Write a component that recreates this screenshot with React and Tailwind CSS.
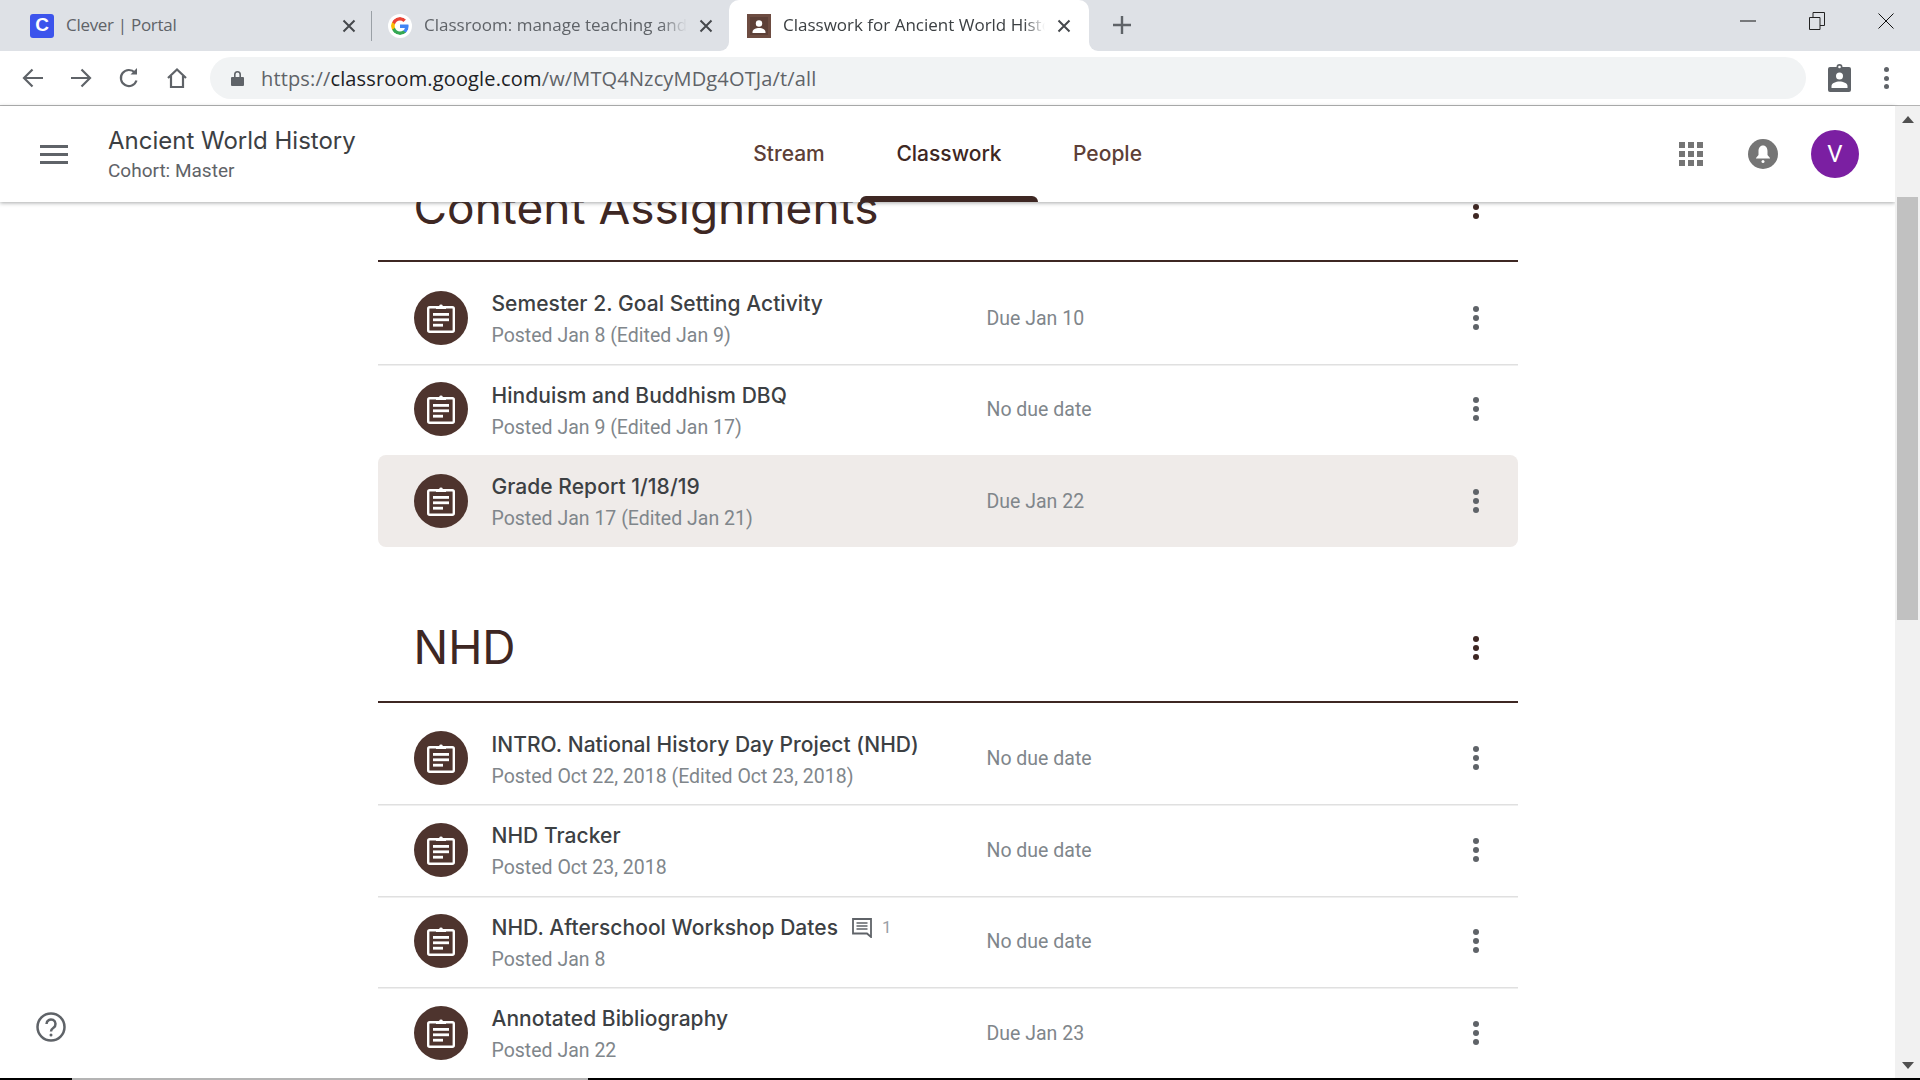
import { Fragment } from 'react';

const contentRows = [
  { title: 'Semester 2. Goal Setting Activity', posted: 'Posted Jan 8 (Edited Jan 9)', due: 'Due Jan 10' },
  { title: 'Hinduism and Buddhism DBQ', posted: 'Posted Jan 9 (Edited Jan 17)', due: 'No due date' },
  { title: 'Grade Report 1/18/19', posted: 'Posted Jan 17 (Edited Jan 21)', due: 'Due Jan 22', active: true },
];

const nhdRows = [
  { title: 'INTRO. National History Day Project (NHD)', posted: 'Posted Oct 22, 2018 (Edited Oct 23, 2018)', due: 'No due date' },
  { title: 'NHD Tracker', posted: 'Posted Oct 23, 2018', due: 'No due date' },
  { title: 'NHD. Afterschool Workshop Dates', posted: 'Posted Jan 8', due: 'No due date', comments: 1 },
  { title: 'Annotated Bibliography', posted: 'Posted Jan 22', due: 'Due Jan 23' },
];

function Dots({ dark }) {
  const dot = `w-[6px] h-[6px] rounded-full ${dark ? 'bg-[#3e2723]' : 'bg-[#5f6368]'}`;
  return (
    <div className="flex flex-col gap-[3px]">
      <div className={dot} />
      <div className={dot} />
      <div className={dot} />
    </div>
  );
}

function TabClose() {
  return (
    <svg width="14" height="14" viewBox="0 0 14 14" className="shrink-0">
      <path d="M1.5 1.5l11 11M12.5 1.5l-11 11" stroke="#45484c" strokeWidth="2" />
    </svg>
  );
}

function AssignmentIcon() {
  return (
    <div className="w-[54px] h-[54px] rounded-full bg-[#4e342e] flex items-center justify-center shrink-0">
      <svg width="28" height="30" viewBox="0 0 28 30" fill="none">
        <rect x="1.2" y="4.200" width="25.600" height="24.600" rx="1.500" stroke="#fff" strokeWidth="2.400" />
        <path d="M9 6V3h3.100a2 2 0 0 1 3.800 0H19v3z" fill="#fff" />
        <rect x="6" y="10" width="16" height="2.800" fill="#fff" />
        <rect x="6" y="15.400" width="16" height="2.800" fill="#fff" />
        <rect x="6" y="20.800" width="10" height="2.800" fill="#fff" />
      </svg>
    </div>
  );
}

function Row({ row, last }) {
  return (
    <div
      className={`h-[91.5px] flex items-center pl-[36px] pr-[39px] ${
        row.active ? 'bg-[#efebe9] rounded-[8px]' : last ? '' : 'shadow-[0_1.5px_0_#e0e0e0]'
      }`}
    >
      <AssignmentIcon />
      <div className="ml-[24px] w-[495px] shrink-0 pt-[4px]">
        <div className="flex items-center">
          <span className="text-[21px] leading-[32px] font-medium text-[#3c4043] font-['Inter',sans-serif] tracking-[0.05px]">
            {row.title}
          </span>
          {row.comments && (
            <span className="flex items-center ml-[14px]">
              <svg width="20" height="20" viewBox="0 0 20 20" fill="none">
                <path d="M1 1h18v18l-4-3.5H1z" stroke="#5f6368" strokeWidth="1.8" />
                <path d="M4.5 5h11M4.5 8h11M4.5 11h11" stroke="#5f6368" strokeWidth="1.6" />
              </svg>
              <span className="ml-[10px] text-[17px] text-[#9aa0a6] font-['Roboto',sans-serif]">{row.comments}</span>
            </span>
          )}
        </div>
        <div className="text-[19.500px] leading-[30px] mt-[1px] text-[#80868b] font-['Roboto',sans-serif]">{row.posted}</div>
      </div>
      <div className="text-[19.500px] pt-[1px] text-[#80868b] font-['Roboto',sans-serif]">{row.due}</div>
      <div className="ml-auto">
        <Dots />
      </div>
    </div>
  );
}

function Section({ title, rows, className }) {
  return (
    <section className={className}>
      <div className="h-[110px] flex items-center justify-between pt-[2px] pl-[36px] pr-[39px] border-b-[2px] border-[#3e2723]">
        <h2 className="text-[46px] font-normal text-[#3e2723] font-['Inter',sans-serif]">{title}</h2>
        <Dots dark />
      </div>
      <div className="pt-[10px]">
        {rows.map((row, i) => (
          <Row key={row.title} row={row} last={i === rows.length - 1 || rows[i + 1].active} />
        ))}
      </div>
    </section>
  );
}

function BrowserChrome() {
  const ui = "font-['Open_Sans',sans-serif]";
  return (
    <Fragment>
      {/* Tabs */}
      <div className={`h-[51px] bg-[#dee1e6] flex shrink-0 ${ui}`}>
        <div className="w-[372px] flex items-center pl-[30px] pr-[16px] relative">
          <div className="w-[24px] h-[24px] rounded-[3px] bg-[#3c54ec] text-white text-[19px] font-bold flex items-center justify-center shrink-0 font-['Liberation_Sans',sans-serif]">
            C
          </div>
          <span className="ml-[12px] -mt-[2px] text-[17px] text-[#5f6368] tracking-[-0.3px]">Clever | Portal</span>
          <span className="ml-auto">
            <TabClose />
          </span>
          <div className="absolute right-0 top-[11px] w-[1px] h-[30px] bg-[#9aa0a6]" />
        </div>
        <div className="w-[357px] flex items-center pl-[16px] pr-[16px]">
          <svg width="24" height="24" viewBox="0 0 24 24" className="shrink-0 bg-white rounded-full p-[3px]">
            <path fill="#4285F4" d="M23.5 12.3c0-.8-.1-1.6-.2-2.3H12v4.5h6.5c-.3 1.5-1.1 2.8-2.4 3.6v3h3.9c2.2-2.1 3.5-5.1 3.5-8.8z" />
            <path fill="#34A853" d="M12 24c3.2 0 6-1.1 8-2.9l-3.9-3c-1.1.7-2.5 1.2-4.1 1.2-3.1 0-5.8-2.1-6.7-5H1.3v3.1C3.3 21.3 7.3 24 12 24z" />
            <path fill="#FBBC05" d="M5.3 14.3c-.5-1.5-.5-3.100 0-4.600V6.600h-4C-.4 9.900-.4 14.100 1.300 17.400z" />
            <path fill="#EA4335" d="M12 4.800c1.800 0 3.300.6 4.600 1.800l3.400-3.400C17.900 1.200 15.200 0 12 0 7.300 0 3.300 2.700 1.300 6.600l4 3.100c.9-2.800 3.600-4.900 6.700-4.900z" />
          </svg>
          <span className="ml-[12px] -mt-[2px] w-[263px] whitespace-nowrap overflow-hidden text-[17px] text-[#5f6368] [mask-image:linear-gradient(to_right,black_90%,transparent)]">
            Classroom: manage teaching and learning
          </span>
          <span className="ml-auto">
            <TabClose />
          </span>
        </div>
        <div className="w-[360px] bg-white rounded-t-[10px] flex items-center pl-[18px] pr-[18px] relative">
          <div className="absolute left-[-9px] bottom-0 w-[9px] h-[9px] bg-white">
            <div className="w-full h-full bg-[#dee1e6] rounded-br-[9px]" />
          </div>
          <div className="absolute right-[-9px] bottom-0 w-[9px] h-[9px] bg-white">
            <div className="w-full h-full bg-[#dee1e6] rounded-bl-[9px]" />
          </div>
          <svg width="24" height="24" viewBox="0 0 24 24" className="shrink-0">
            <rect width="24" height="24" fill="#6d4c41" />
            <rect x="3" y="3" width="18" height="18" fill="#5d4037" />
            <circle cx="12" cy="9.500" r="3.200" fill="#fff" />
            <path d="M5.500 18c0-2.800 3.600-4 6.500-4s6.500 1.200 6.500 4v1h-13z" fill="#fff" />
          </svg>
          <span className="ml-[12px] -mt-[2px] w-[262px] whitespace-nowrap overflow-hidden text-[17px] text-[#3c4043] [mask-image:linear-gradient(to_right,black_92%,transparent)]">
            Classwork for Ancient World History
          </span>
          <span className="ml-auto">
            <TabClose />
          </span>
        </div>
        <div className="ml-[23px] flex items-center pb-[2px]">
          <svg width="20" height="20" viewBox="0 0 20 20">
            <path d="M10 1v18M1 10h18" stroke="#5f6368" strokeWidth="2.400" />
          </svg>
        </div>
        <div className="ml-auto flex items-center pr-[26px] gap-[53px] pb-[9px]">
          <svg width="16" height="16" viewBox="0 0 16 16">
            <path d="M0 8h16" stroke="#111" strokeWidth="1" />
          </svg>
          <svg width="16" height="18" viewBox="0 0 16 18" fill="none">
            <path d="M.5 5.500h10.500v12H.5zM4 5.500V.5h11.500v13H11" stroke="#222" strokeWidth="1" />
          </svg>
          <svg width="16" height="16" viewBox="0 0 16 16">
            <path d="M.5.500l15 15M15.500.500l-15 15" stroke="#111" strokeWidth="1" />
          </svg>
        </div>
      </div>

      {/* Toolbar */}
      <div className="h-[55px] bg-white border-b border-[#b4b4b4] flex items-center shrink-0">
        <div className="flex items-center pl-[22px] gap-[26px]">
          <svg width="22" height="22" viewBox="0 0 22 22" fill="none" stroke="#5f6368" strokeWidth="2.200">
            <path d="M21 11H2M10.500 2.500L2 11l8.500 8.500" />
          </svg>
          <svg width="22" height="22" viewBox="0 0 22 22" fill="none" stroke="#5f6368" strokeWidth="2.200">
            <path d="M1 11h19M11.500 2.500L20 11l-8.500 8.500" />
          </svg>
          <svg width="22" height="22" viewBox="0 0 22 22" fill="none" stroke="#5f6368" strokeWidth="2.200">
            <path d="M18.500 13.500a8 8 0 1 1-1.600-7.800" />
            <path d="M19 1v6.500h-6.500" fill="#5f6368" stroke="none" />
          </svg>
          <svg width="22" height="22" viewBox="0 0 22 22" fill="none" stroke="#5f6368" strokeWidth="2.200">
            <path d="M2 11l9-8.500 9 8.500M5 9v11h12V9" />
          </svg>
        </div>
        <div className={`ml-[22px] w-[1596px] h-[42px] rounded-full bg-[#f1f3f4] flex items-center pl-[21px] ${ui}`}>
          <svg width="13" height="16" viewBox="0 0 13 16" className="shrink-0">
            <path d="M3 7V4.500a3.500 3.500 0 0 1 7 0V7h2a1 1 0 0 1 1 1v7a1 1 0 0 1-1 1H1a1 1 0 0 1-1-1V8a1 1 0 0 1 1-1zm1.600 0h3.800V4.500a1.900 1.900 0 0 0-3.800 0z" fill="#5f6368" />
          </svg>
          <span className="ml-[17px] pt-[1px] text-[20px] text-[#5f6368] tracking-[0.15px]">
            https://<span className="text-[#202124]">classroom.google.com</span>/w/MTQ4NzcyMDg4OTJa/t/all
          </span>
        </div>
        <div className="ml-auto flex items-center pr-[31px] gap-[33px]">
          <svg width="23" height="28" viewBox="0 0 23 28">
            <path d="M2 3h6.500a3 3 0 0 1 6 0H21a2 2 0 0 1 2 2v21a2 2 0 0 1-2 2H2a2 2 0 0 1-2-2V5a2 2 0 0 1 2-2z" fill="#5f6368" />
            <circle cx="11.500" cy="3" r="1.300" fill="#fff" />
            <circle cx="11.500" cy="12" r="3.500" fill="#fff" />
            <path d="M3.500 24v-2c0-3 4.500-4.500 8-4.500s8 1.500 8 4.500v2z" fill="#fff" />
          </svg>
          <div className="flex flex-col gap-[3.500px]">
            <div className="w-[5px] h-[5px] rounded-full bg-[#5f6368]" />
            <div className="w-[5px] h-[5px] rounded-full bg-[#5f6368]" />
            <div className="w-[5px] h-[5px] rounded-full bg-[#5f6368]" />
          </div>
        </div>
      </div>
    </Fragment>
  );
}

function ClassHeader() {
  return (
    <header className="h-[96px] bg-white shadow-[0_1px_4px_rgba(60,64,67,0.45)] relative z-10 flex items-center shrink-0">
      <div className="w-[108px] pl-[40px] shrink-0">
        <div className="w-[28px] flex flex-col gap-[5px]">
          <div className="h-[3px] bg-[#5f6368]" />
          <div className="h-[3px] bg-[#5f6368]" />
          <div className="h-[3px] bg-[#5f6368]" />
        </div>
      </div>
      <div className="w-[645px] shrink-0 pt-[3px]">
        <div className="text-[24px] leading-[30px] text-[#3c4043] font-['Inter',sans-serif]">Ancient World History</div>
        <div className="text-[19px] leading-[28px] mt-[1px] text-[#5f6368] font-['Roboto',sans-serif]">Cohort: Master</div>
      </div>
      <nav className="h-full flex text-[21px] font-medium font-['Inter',sans-serif]">
        <div className="w-[72px] flex items-center justify-center text-[#5d4037]">Stream</div>
        <div className="ml-[35px] w-[178px] flex items-center justify-center text-[#3e2723] relative">
          Classwork
          <div className="absolute left-0 right-0 bottom-0 h-[6px] bg-[#3e2723] rounded-t-[6px]" />
        </div>
        <div className="ml-[36px] w-[67px] flex items-center justify-center text-[#5d4037]">People</div>
      </nav>
      <div className="ml-auto flex items-center pr-[36px]">
        <div className="grid grid-cols-3 gap-[3px]">
          {[...Array(9).keys()].map((i) => (
            <div key={i} className="w-[6px] h-[6px] bg-[#757575]" />
          ))}
        </div>
        <div className="ml-[45px] w-[30px] h-[30px] rounded-full bg-[#757575] flex items-center justify-center">
          <svg width="18" height="20" viewBox="0 0 18 20">
            <path d="M9 1.500c3 0 4.500 2.500 4.500 5.500v4l2.500 3v.5H2V14l2.500-3V7c0-3 1.500-5.500 4.500-5.500z" fill="#fff" />
            <circle cx="9" cy="17.500" r="1.500" fill="#fff" />
          </svg>
        </div>
        <div className="ml-[33px] w-[48px] h-[48px] rounded-full bg-[#7b1fa2] text-white text-[24px] flex items-center justify-center font-['Roboto',sans-serif]">
          V
        </div>
      </div>
    </header>
  );
}

export default function App() {
  return (
    <div className="w-[1920px] h-[1080px] overflow-hidden flex flex-col bg-white">
      <BrowserChrome />

      <div className="flex-1 min-h-0 flex">
        {/* Page */}
        <div className="flex-1 min-w-0 flex flex-col relative">
          <ClassHeader />
          <main className="flex-1 min-h-0 overflow-hidden">
            <div className="w-[1140px] mx-auto -mt-[50px]">
              <Section title="Content Assignments" rows={contentRows} />
              <Section title="NHD" rows={nhdRows} className="mt-[46px]" />
            </div>
          </main>
          {/* Help button floats over the page */}
          <svg width="30" height="30" viewBox="0 0 30 30" fill="none" className="absolute left-[36px] bottom-[36px]">
            <circle cx="15" cy="15" r="13.500" stroke="#5f6368" strokeWidth="2.500" />
            <path d="M10.500 12a4.500 4.500 0 1 1 7 3.700c-1.500 1-2.500 1.800-2.500 3.800" stroke="#5f6368" strokeWidth="2.500" />
            <circle cx="15" cy="23" r="1.500" fill="#5f6368" />
          </svg>
        </div>

        {/* Scrollbar */}
        <div className="w-[25px] bg-[#f1f1f1] flex flex-col items-center relative z-20">
          <svg width="12" height="7" viewBox="0 0 12 7" className="mt-[10px]">
            <path d="M6 0l6 7H0z" fill="#505050" />
          </svg>
          <div className="mt-[74px] w-[21px] h-[423px] bg-[#c1c1c1]" />
          <svg width="12" height="7" viewBox="0 0 12 7" className="mt-auto mb-[9px]">
            <path d="M0 0h12L6 7z" fill="#505050" />
          </svg>
        </div>
      </div>

      {/* Strip at the bottom edge of the window */}
      <div className="h-[2px] flex shrink-0 bg-black">
        <div className="ml-[72px] w-[516px] bg-[#b4b4b4]" />
      </div>
    </div>
  );
}
